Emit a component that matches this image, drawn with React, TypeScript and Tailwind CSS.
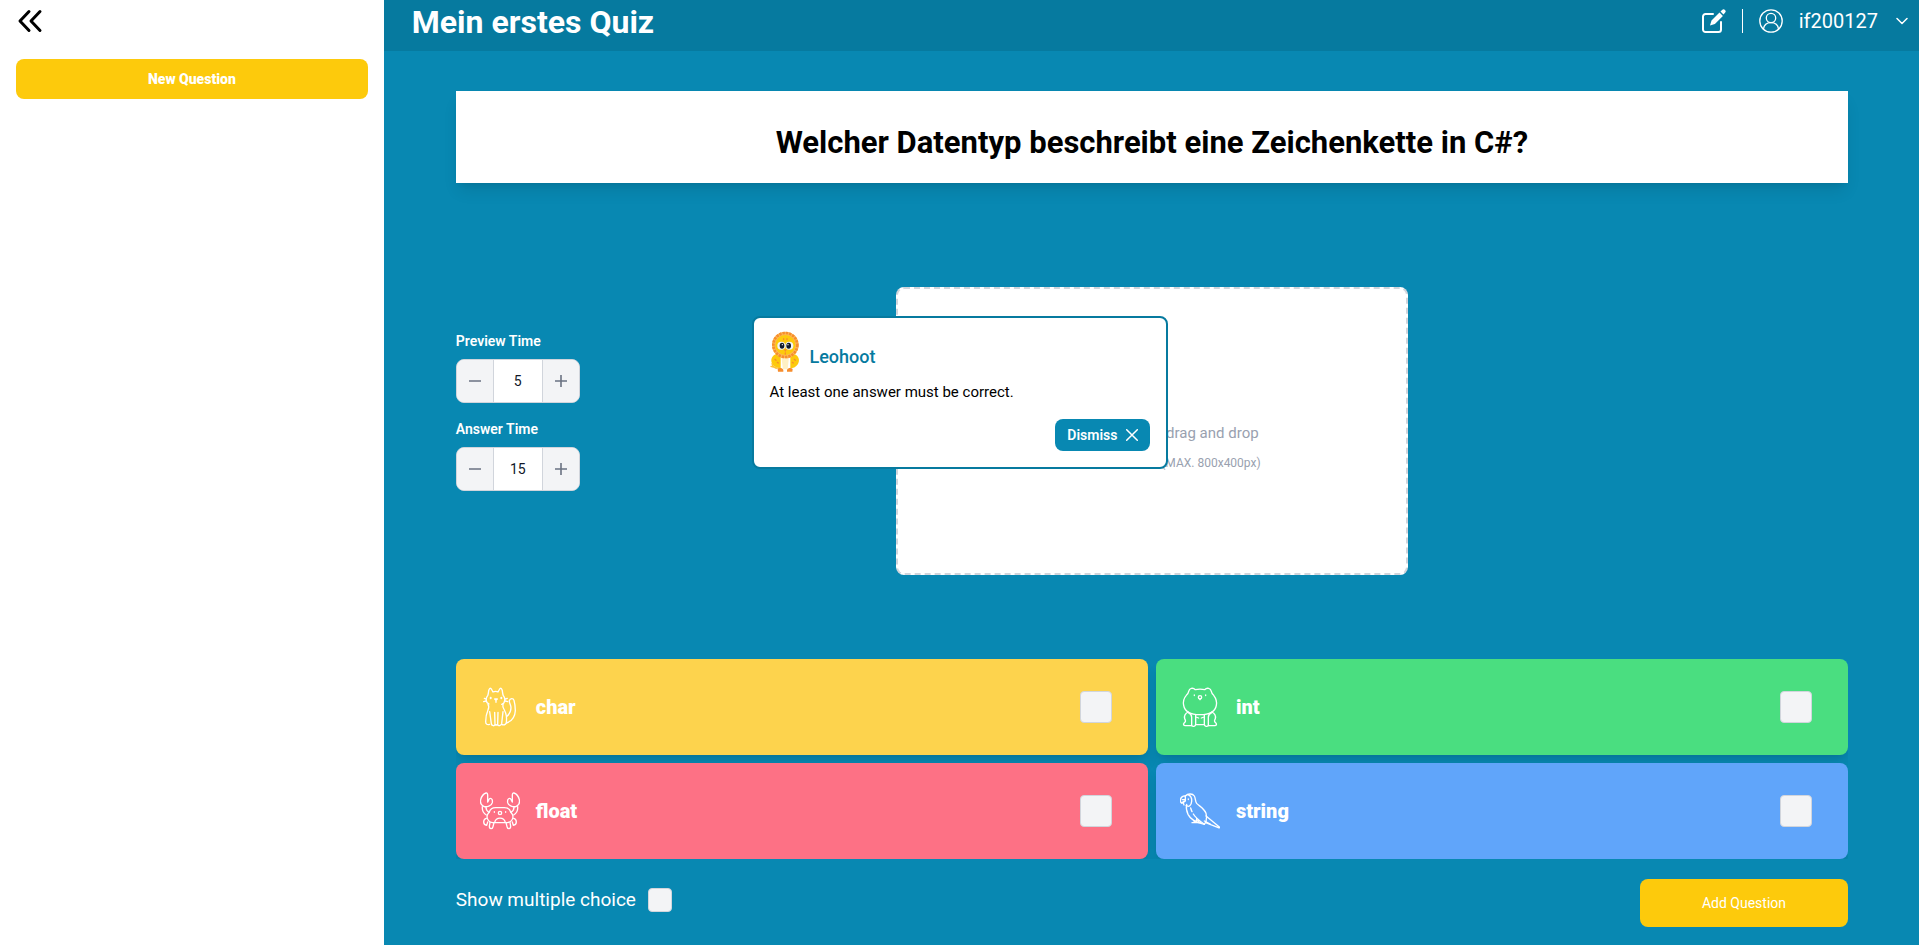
import { useState, type ReactNode } from "react";

const iconStroke = {
  fill: "none",
  stroke: "currentColor",
  strokeLinecap: "round" as const,
  strokeLinejoin: "round" as const,
};

function CatIcon() {
  return (
    <svg viewBox="30 36 120 120" className="size-10 shrink-0" strokeWidth="4" aria-hidden="true" {...iconStroke}>
      <path d="M51 83c-4-8-2-16 2-21 2-4 2-9 3-14 1-7 5-11 8-6l5 9c5-2 11-2 15 0l5-9c3-5 7-1 8 6 1 5 1 10 3 14 4 5 6 13 2 21-2 2-4 4-7 5M51 83l6 4" />
      <path d="M54 88c4 6 3 10 0 17-5 11-7 22-7 35 0 8 5 10 12 8M99 87c-2 7 0 12 4 18 6 11 8 24 6 38-2 7-8 8-14 5" />
      <path d="M59 110l5 36c1 8 11 8 11 1l-1-35M84 112l-1 35c0 7 10 7 12-1l4-36M75 147c1 4 7 4 8 0" />
      <path d="M109 144c15-5 26-19 27-37 0-13-2-24-4-31-2-7-12-7-14 1-1 7 5 12 5 21s-4 18-11 25" />
      <path d="M43 70l6 2M41 80l7-2M112 70l-6 2M113 80l-7-2" />
      <ellipse cx="62" cy="69" rx="3" ry="4" fill="currentColor" stroke="none" />
      <ellipse cx="94" cy="69" rx="3" ry="4" fill="currentColor" stroke="none" />
      <path d="M74 72h8l-4 4zM78 76v6" />
    </svg>
  );
}

function BearIcon() {
  return (
    <svg viewBox="30 36 120 120" className="size-10 shrink-0" strokeWidth="4" aria-hidden="true" {...iconStroke}>
      <path d="M49 61c4-3 6-7 7-12 2-10 13-12 20-5 8-2 20-2 28 0 7-7 18-5 20 5 1 5 3 9 7 12 7 9 10 20 8 30-3 18-18 28-49 28S44 109 41 91c-2-10 0-21 8-30" />
      <circle cx="90" cy="67" r="5" />
      <path d="M90 72v2" />
      <ellipse cx="73" cy="61" rx="2" ry="3" fill="currentColor" stroke="none" />
      <ellipse cx="107" cy="61" rx="2" ry="3" fill="currentColor" stroke="none" />
      <path d="M55 111c-9 4-13 11-11 20 3 6 4 8-1 12-5 5-2 9 3 9h18M125 111c9 4 13 11 11 20-3 6-4 8 1 12 5 5 2 9-3 9h-18" />
      <path d="M55 113c7 3 10 7 10 14v25M125 113c-7 3-10 7-10 14v25M77 119v29c0 8-12 8-12 1M103 119v29c0 8 12 8 12 1M77 149h26M78 126l8 3M102 126l-8 3" />
    </svg>
  );
}

function CrabIcon() {
  return (
    <svg viewBox="30 33 120 120" className="size-10 shrink-0" strokeWidth="4" aria-hidden="true" {...iconStroke}>
      <path d="M48 39c-9 3-14 12-16 20-2 10 2 17 9 20 9 4 24-2 26-11 1-8-1-13-6-13-5 0-4 7-8 11V45c0-4-2-7-5-6M132 39c9 3 14 12 16 20 2 10-2 17-9 20-9 4-24-2-26-11-1-8 1-13 6-13 5 0 4 7 8 11V45c0-4 2-7 5-6" />
      <path d="M37 80c-1 11 3 20 12 25M48 82c0 7 3 12 9 15M143 80c1 11-3 20-12 25M132 82c0 7-3 12-9 15" />
      <path d="M58 96c2-7 9-13 19-13h26c10 0 17 6 19 13 4 4 7 9 7 15-1 9-7 15-16 17H67c-9-2-15-8-16-17 0-6 3-11 7-15" />
      <circle cx="90" cy="99" r="5" />
      <ellipse cx="73" cy="96" rx="2" ry="3" fill="currentColor" stroke="none" />
      <ellipse cx="107" cy="96" rx="2" ry="3" fill="currentColor" stroke="none" />
      <path d="M74 127c4-17 28-17 32 0" />
      <path d="M49 115c-7 2-8 6-8 11 0 6 4 9 9 10l3-10M131 115c7 2 8 6 8 11 0 6-4 9-9 10l-3-10M60 127l-2 12c0 9 10 9 11 1l3-12M120 127l2 12c0 9-10 9-11 1l-3-12" />
    </svg>
  );
}

function ParrotIcon() {
  return (
    <svg viewBox="30 33 120 120" className="size-10 shrink-0" strokeWidth="4" aria-hidden="true" {...iconStroke}>
      <path d="M46 48c7-7 21-9 27 0 4 6 2 15 7 22 7 8 22 14 28 30 3 8 2 15 0 25l-5 8c-15-3-38-8-49-30-5-11-6-21-4-30" />
      <path d="M46 48c-7-1-14 4-15 12 0 5 2 9 5 10 2-5 4-7 10-7M46 48v15M46 63c-6 2-7 6-4 12M46 58l-9 1" />
      <path d="M48 76c10 8 16-2 17-12 1-10-3-17-11-20" />
      <ellipse cx="55" cy="58" rx="2" ry="3" fill="currentColor" stroke="none" />
      <path d="M62 84c1 3 2 7 4 11M70 102c6 11 18 20 33 31M108 108l40 33c2 2 0 3-3 2l-38-15M103 123l18 9M80 114v13M66 128h25M75 121l-4 7M84 121l4 7" />
    </svg>
  );
}

function Lion() {
  return (
    <svg viewBox="33 14 96 126" className="h-[42px] w-8" aria-hidden="true">
      <path d="M50 84c-13 5-16 19-10 29 6 10 18 13 25 13V88zM107 84c13 5 16 19 10 29-6 10-16 13-23 13V88z" fill="#fdca0c" />
      <path d="M39 112c1 8 10 13 22 14M36 120l7 2 9 4" fill="none" stroke="#fdc33a" strokeWidth="4" strokeLinecap="round" />
      <path d="M67 91h23l-4 38H72z" fill="#fff0c4" />
      <path d="M56 128c4-4 14-4 17 3v5H57zM84 131c3-7 13-7 17-3l-1 8H84z" fill="#f78d2d" />
      <circle cx="79" cy="56" r="40" fill="#fcb957" />
      <circle cx="79" cy="56" r="36" fill="none" stroke="#f78d2d" strokeWidth="8" strokeDasharray="7 3" />
      <circle cx="79" cy="56" r="30" fill="#fdca0c" />
      <circle cx="67" cy="58" r="12" fill="#f1f5f9" />
      <circle cx="91" cy="58" r="12" fill="#f1f5f9" />
      <ellipse cx="69" cy="58" rx="7" ry="9" fill="#101828" />
      <ellipse cx="89" cy="58" rx="7" ry="9" fill="#101828" />
      <circle cx="70" cy="55" r="2" fill="#ffffff" />
      <circle cx="87" cy="55" r="2" fill="#ffffff" />
      <path d="M74 69h10l-5 8z" fill="#f78d2d" />
      <path d="M74 37v3M84 37v3M79 80v3M48 99l3 3M55 108l3 2M106 99l3 3M100 108l3 2" stroke="#f78d2d" strokeWidth="4" strokeLinecap="round" />
    </svg>
  );
}

function Stepper({ id, label, initial }: { id: string; label: string; initial: string }) {
  const [value, setValue] = useState(initial);
  const step = (delta: number) => setValue(String(Math.max(0, Number(value) + delta)));
  const side = "flex w-[37px] items-center justify-center border-gray-300 bg-gray-100 text-gray-500";
  return (
    <div>
      <label htmlFor={id} className="mb-2 block text-sm font-semibold text-white">{label}</label>
      <div className="flex h-11 w-[124px] overflow-hidden rounded-lg border border-gray-300 bg-gray-100">
        <button type="button" aria-label={`Decrease ${label}`} onClick={() => step(-1)} className={`${side} border-r`}>
          <svg viewBox="0 0 12 12" className="size-3" strokeWidth="1.6" {...iconStroke}><path d="M0 6h12" /></svg>
        </button>
        <input id={id} value={value} onChange={(e) => setValue(e.target.value)} className="min-w-0 flex-1 bg-white text-center text-sm text-gray-900 outline-none" />
        <button type="button" aria-label={`Increase ${label}`} onClick={() => step(1)} className={`${side} border-l`}>
          <svg viewBox="0 0 12 12" className="size-3" strokeWidth="1.6" {...iconStroke}><path d="M0 6h12M6 0v12" /></svg>
        </button>
      </div>
    </div>
  );
}

const answers: { text: string; color: string; icon: ReactNode }[] = [
  { text: "char", color: "bg-[#fdd34d]", icon: <CatIcon /> },
  { text: "int", color: "bg-[#4ade80]", icon: <BearIcon /> },
  { text: "float", color: "bg-[#fd7185]", icon: <CrabIcon /> },
  { text: "string", color: "bg-[#60a5fa]", icon: <ParrotIcon /> },
];

export default function App() {
  const [open, setOpen] = useState(true);
  return (
    <div className="flex min-h-screen bg-[#0888b2] font-['Roboto',sans-serif]">
      <aside className="flex w-1/5 shrink-0 flex-col bg-white px-4">
        <div className="flex h-[59px] items-start pt-2">
          <button type="button" aria-label="Collapse sidebar" className="text-black">
            <svg viewBox="0 0 28 26" className="h-[26px] w-7" strokeWidth="3" {...iconStroke}>
              <path d="M13 3.500L4 13l9 9.500M24 3.500L15 13l9 9.500" />
            </svg>
          </button>
        </div>
        <button type="button" className="h-10 rounded-lg bg-[#fdca0c] text-sm font-black text-white">New Question</button>
      </aside>

      <div className="flex min-w-0 flex-1 flex-col">
        <header className="flex h-[51px] items-start justify-between bg-[#067a9f] pr-[11px] pl-7 text-white">
          <h1 className="pt-1 text-[32px] leading-9 font-bold">Mein erstes Quiz</h1>
          <div className="flex h-[42px] items-center gap-4">
            <a href="#edit" aria-label="Edit quiz">
              <svg viewBox="0 0 24 24" className="size-6" aria-hidden="true">
                <path d="M11 5H3.500A2.500 2.500 0 0 0 1 7.500v13A2.500 2.500 0 0 0 3.500 23h13a2.500 2.500 0 0 0 2.500-2.500V13" fill="none" stroke="currentColor" strokeWidth="2" strokeLinecap="round" />
                <path d="M8 16.500l1.500-5L17.500 3.500l3.400 3.400-8 8zM18.500 2.500l1.600-1.600a2 2 0 0 1 2.900 2.900l-1.500 1.600z" fill="currentColor" />
              </svg>
            </a>
            <div className="h-6 w-px bg-white" />
            <button type="button" className="flex items-center gap-4">
              <svg viewBox="0 0 24 24" className="size-6" strokeWidth="1.300" aria-hidden="true" {...iconStroke}>
                <circle cx="12" cy="12" r="11.200" />
                <circle cx="12" cy="9" r="4.700" />
                <path d="M4.500 20c.5-4 3.500-6.300 7.500-6.300s7 2.300 7.500 6.300" />
              </svg>
              <span className="pr-0.5 text-xl">if200127</span>
              <svg viewBox="0 0 12 12" className="size-3" strokeWidth="1.500" aria-hidden="true" {...iconStroke}>
                <path d="M1 3.500l5 5 5-5" />
              </svg>
            </button>
          </div>
        </header>

        <main className="flex flex-1 flex-col pt-10 pr-[71px] pb-[18px] pl-[72px]">
          <div className="flex h-[92px] items-center justify-center bg-white pt-3 shadow-lg">
            <h2 className="text-[31px] font-bold text-black">Welcher Datentyp beschreibt eine Zeichenkette in C#?</h2>
          </div>

          <div className="grid flex-1 grid-cols-[1fr_minmax(0,512px)_1fr] items-center pt-5">
            <div className="flex flex-col gap-4 pb-10">
              <Stepper id="preview-time" label="Preview Time" initial="5" />
              <Stepper id="answer-time" label="Answer Time" initial="15" />
            </div>
            <label htmlFor="image-upload" className="flex h-72 cursor-pointer flex-col items-center justify-center rounded-lg border-2 border-dashed border-gray-300 bg-white pt-8 text-gray-400">
              <span className="mb-2 text-[15px] leading-5"><b className="font-semibold">Click to upload</b> or drag and drop</span>
              <span className="pt-1 text-xs">SVG, PNG, JPG or GIF (MAX. 800x400px)</span>
              <input id="image-upload" type="file" className="hidden" />
            </label>
          </div>

          <div className="grid grid-cols-2 gap-2 overflow-hidden">
            {answers.map((answer) => (
              <label key={answer.text} className={`${answer.color} flex h-24 items-center gap-4 rounded-lg pr-9 pl-6 text-white shadow-lg`}>
                {answer.icon}
                <span className="flex-1 text-xl font-black">{answer.text}</span>
                <input type="checkbox" className="size-8 appearance-none rounded border border-gray-300 bg-gray-100 checked:bg-blue-600" />
              </label>
            ))}
          </div>

          <div className="mt-5 flex items-start justify-between">
            <label className="flex items-center gap-3 pt-[7px] text-[19px] leading-7 text-white">
              Show multiple choice
              <input type="checkbox" className="size-6 appearance-none rounded border border-gray-300 bg-gray-100 checked:bg-blue-600" />
            </label>
            <button type="button" className="h-12 w-52 rounded-lg bg-[#fdca0c] text-sm text-white">Add Question</button>
          </div>
        </main>
      </div>

      {open && (
        <div className="pointer-events-none fixed inset-0 flex items-center justify-center pb-40">
          <div role="alertdialog" aria-labelledby="dialog-title" className="pointer-events-auto flex w-[416px] flex-col rounded-lg border-2 border-[#067a9f] bg-white px-4 pt-[13px] pb-4">
            <div className="flex items-start gap-2">
              <Lion />
              <h3 id="dialog-title" className="pt-3 text-lg font-medium text-[#067a9f]">Leohoot</h3>
            </div>
            <p className="mt-2 mb-4 text-[15px] leading-[22px] text-black">At least one answer must be correct.</p>
            <button type="button" onClick={() => setOpen(false)} className="flex h-8 items-center gap-2 self-end rounded-lg bg-[#0888b2] px-3 text-sm font-semibold text-white">
              Dismiss
              <svg viewBox="0 0 12 12" className="size-3" strokeWidth="1.500" aria-hidden="true" {...iconStroke}>
                <path d="M.7.7l10.600 10.600M11.300.7L.7 11.300" />
              </svg>
            </button>
          </div>
        </div>
      )}
    </div>
  );
}
